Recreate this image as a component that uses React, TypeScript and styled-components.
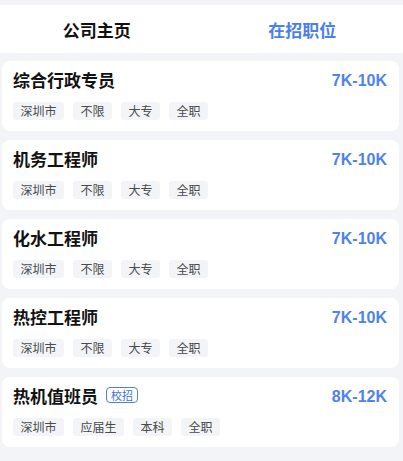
import React from "react";
import styled, { createGlobalStyle } from "styled-components";

const GlobalStyle = createGlobalStyle`
  html, body {
    margin: 0;
    padding: 0;
    background: #f3f4f7;
    font-family: "Noto Sans CJK SC", "Noto Sans", sans-serif;
  }
`;

const jobs = [
  { title: "综合行政专员", salary: "7K-10K", tags: ["深圳市", "不限", "大专", "全职"] },
  { title: "机务工程师", salary: "7K-10K", tags: ["深圳市", "不限", "大专", "全职"] },
  { title: "化水工程师", salary: "7K-10K", tags: ["深圳市", "不限", "大专", "全职"] },
  { title: "热控工程师", salary: "7K-10K", tags: ["深圳市", "不限", "大专", "全职"] },
  { title: "热机值班员", salary: "8K-12K", tags: ["深圳市", "应届生", "本科", "全职"], badge: "校招" },
];

const Page = styled.div`
  width: 403px;
  min-height: 461px;
  padding-top: 5px;
  box-sizing: border-box;
  background: #f3f4f7;
`;

const Tabs = styled.div`
  display: grid;
  grid-template-columns: 1fr 1fr;
  height: 48px;
  background: #fff;
  margin-bottom: 8px;
`;

const Tab = styled.div<{ $active?: boolean }>`
  display: flex;
  align-items: center;
  justify-content: center;
  font-size: 17px;
  font-weight: 700;
  color: ${(p) => (p.$active ? "#4b7fe9" : "#111")};
  padding-right: ${(p) => (p.$active ? "0" : "8px")};
`;

const List = styled.div`
  display: flex;
  flex-direction: column;
  gap: 9px;
  padding: 0 4px 0 2px;
`;

const Card = styled.div`
  background: #fff;
  border-radius: 8px;
  height: 70px;
  box-sizing: border-box;
  padding: 5px 12px 0 11px;
`;

const Top = styled.div`
  display: flex;
  align-items: center;
  justify-content: space-between;
  height: 26px;
`;

const TitleWrap = styled.div`
  display: flex;
  align-items: center;
  gap: 8px;
`;

const Title = styled.div`
  font-size: 17px;
  font-weight: 700;
  color: #121212;
`;

const Badge = styled.span`
  font-size: 11px;
  line-height: 14px;
  color: #3e6fd6;
  border: 1px solid #4b7fe9;
  border-radius: 4px;
  padding: 0 4px;
`;

const Salary = styled.div`
  font-family: "Liberation Sans", Arial, sans-serif;
  font-size: 16px;
  font-weight: 700;
  color: #4f83ea;
  padding-top: 3px;
`;

const Tags = styled.div`
  display: flex;
  gap: 9px;
  margin-top: 10px;
`;

const Tag = styled.span`
  font-size: 12px;
  line-height: 18px;
  color: #4a4a4a;
  background: #f2f4f8;
  border-radius: 3px;
  padding: 0 7.5px;
`;

export default function App() {
  return (
    <>
      <GlobalStyle />
      <Page>
        <Tabs>
          <Tab>公司主页</Tab>
          <Tab $active>在招职位</Tab>
        </Tabs>
        <List>
          {jobs.map((job) => (
            <Card key={job.title}>
              <Top>
                <TitleWrap>
                  <Title>{job.title}</Title>
                  {job.badge && <Badge>{job.badge}</Badge>}
                </TitleWrap>
                <Salary>{job.salary}</Salary>
              </Top>
              <Tags>
                {job.tags.map((t) => (
                  <Tag key={t}>{t}</Tag>
                ))}
              </Tags>
            </Card>
          ))}
        </List>
      </Page>
    </>
  );
}
